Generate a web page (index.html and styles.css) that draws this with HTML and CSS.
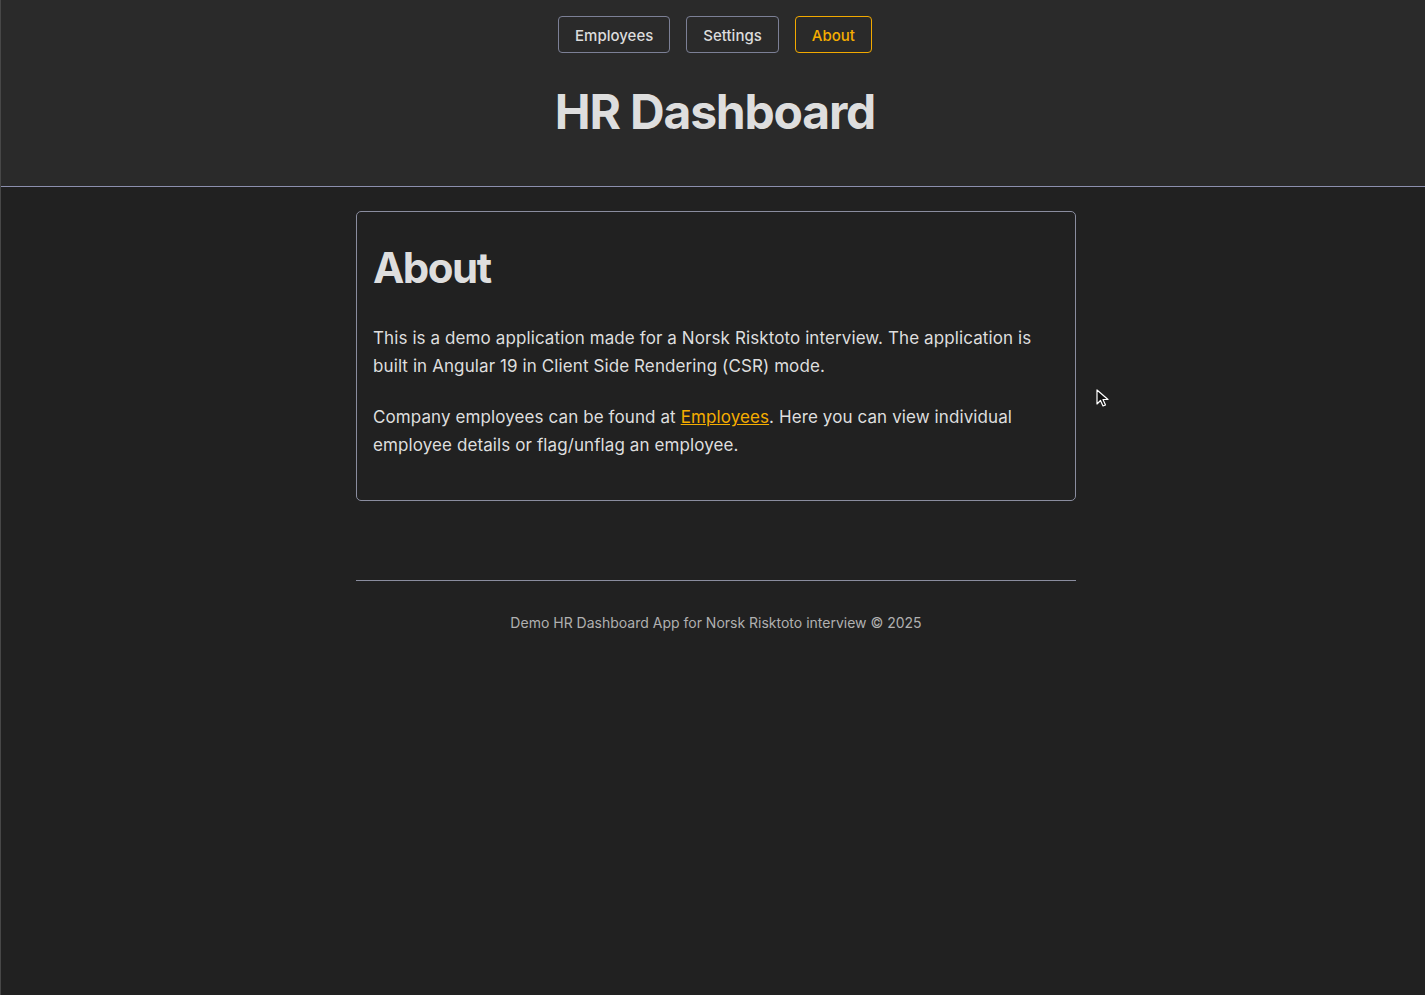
FILE: index.html
```html
<!DOCTYPE html>
<html lang="en">
<head>
<meta charset="utf-8">
<title>HR Dashboard</title>
<link rel="stylesheet" href="styles.css">
</head>
<body>
<header class="site-header">
  <nav class="nav">
    <a class="nav-btn" href="#">Employees</a>
    <a class="nav-btn" href="#">Settings</a>
    <a class="nav-btn active" href="#">About</a>
  </nav>
  <h1 class="title">HR Dashboard</h1>
</header>
<main class="main">
  <section class="card">
    <h2 class="card-title">About</h2>
    <p class="para">This is a demo application made for a Norsk Risktoto interview. The application is built in Angular 19 in Client Side Rendering (CSR) mode.</p>
    <p class="para">Company employees can be found at <a class="link" href="#">Employees</a>. Here you can view individual employee details or flag/unflag an employee.</p>
  </section>
  <footer class="footer">
    <p class="footer-text">Demo HR Dashboard App for Norsk Risktoto interview © 2025</p>
  </footer>
</main>
<svg class="cursor" width="14" height="20" viewBox="0 0 14 20"><path d="M1 1 L1 15 L4.5 11.5 L7 17 L9.5 16 L7 10.5 L12 10.5 Z" fill="#111" stroke="#fff" stroke-width="1.2" stroke-linejoin="round"/></svg>
</body>
</html>
```
FILE: styles.css
```css
html, body {
  margin: 0;
  padding: 0;
}
body {
  background: #212121;
  color: #dedede;
  font-family: Inter, "Noto Sans", "Liberation Sans", sans-serif;
  min-height: 995px;
  border-left: 1px solid #474747;
  box-sizing: border-box;
}
.site-header {
  background: #2a2a2a;
  border-bottom: 1px solid #8c8fae;
  height: 187px;
  box-sizing: border-box;
  padding: 16px 0 0 4px;
  display: flex;
  flex-direction: column;
  align-items: center;
}
.nav {
  display: flex;
  gap: 16px;
}
.nav-btn {
  display: inline-flex;
  align-items: center;
  height: 37px;
  box-sizing: border-box;
  padding: 1px 16px 0;
  border: 1px solid #7c8096;
  border-radius: 4px;
  color: #dcdcdc;
  text-decoration: none;
  font-size: 15px;
  font-weight: 500;
}
.nav-btn.active {
  border-color: #f2a900;
  color: #f5ad00;
}
.title {
  margin: 30px 0 0;
  font-size: 48px;
  line-height: 58px;
  font-weight: 700;
  color: #dedede;
  letter-spacing: -1.2px;
}
.main {
  width: 720px;
  margin: 24px auto 0;
  position: relative;
  left: 3px;
}
.card {
  border: 1px solid #8a8d9f;
  border-radius: 5px;
  padding: 16px 16px 41px;
  background: #212121;
}
.card-title {
  margin: 14px 0 30px;
  font-size: 42px;
  line-height: 52px;
  font-weight: 700;
  color: #dedede;
  letter-spacing: -1.5px;
}
.para {
  margin: 0 0 23px;
  font-size: 17px;
  line-height: 28px;
  letter-spacing: 0.1px;
  color: #dedede;
}
.para:last-child {
  margin-bottom: 0;
}
.link {
  color: #f5ad00;
  text-decoration: underline;
}
.footer {
  margin-top: 79px;
  border-top: 1px solid #8a8d9f;
  text-align: center;
}
.footer-text {
  margin: 32px 0 0;
  font-size: 14px;
  line-height: 20px;
  color: #b0b0b0;
}
.cursor {
  position: absolute;
  left: 1096px;
  top: 389px;
}
```
